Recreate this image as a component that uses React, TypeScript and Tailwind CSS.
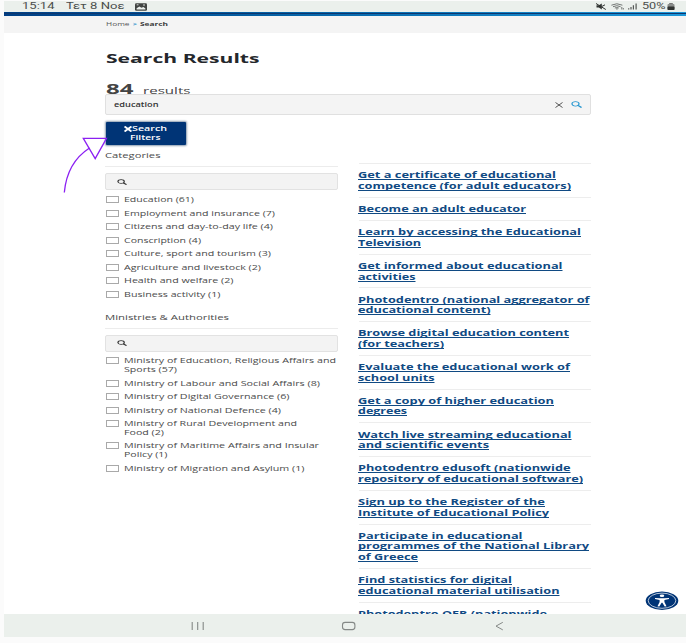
import { useLayoutEffect, useRef, useState } from "react";
import type { ReactNode } from "react";

/* A single line of text stretched horizontally to an exact width. */
function Line({ w, className = "", children }: { w: number; className?: string; children: ReactNode }) {
  const ref = useRef<HTMLSpanElement>(null);
  const [scale, setScale] = useState(1);
  useLayoutEffect(() => {
    const el = ref.current;
    if (el) {
      const natural = parseFloat(getComputedStyle(el).width);
      if (natural > 0) setScale(w / natural);
    }
  }, [w]);
  return (
    <span className={`block text-left ${className}`} style={{ width: w }}>
      <span ref={ref} className="inline-block origin-left whitespace-nowrap align-top" style={{ transform: `scaleX(${scale})` }}>
        {children}
      </span>
    </span>
  );
}

type TextLine = [string, number];

const categories: TextLine[][] = [
  [["Education (61)", 70]],
  [["Employment and insurance (7)", 151]],
  [["Citizens and day-to-day life (4)", 149]],
  [["Conscription (4)", 77]],
  [["Culture, sport and tourism (3)", 147]],
  [["Agriculture and livestock (2)", 137]],
  [["Health and welfare (2)", 109.5]],
  [["Business activity (1)", 96.5]],
];

const ministries: TextLine[][] = [
  [["Ministry of Education, Religious Affairs and", 212], ["Sports (57)", 53]],
  [["Ministry of Labour and Social Affairs (8)", 196]],
  [["Ministry of Digital Governance (6)", 165.5]],
  [["Ministry of National Defence (4)", 157]],
  [["Ministry of Rural Development and", 173], ["Food (2)", 40]],
  [["Ministry of Maritime Affairs and Insular", 195], ["Policy (1)", 43.5]],
  [["Ministry of Migration and Asylum (1)", 180.5]],
];

const results: TextLine[][] = [
  [["Get a certificate of educational", 198], ["competence (for adult educators)", 213]],
  [["Become an adult educator", 168]],
  [["Learn by accessing the Educational", 223], ["Television", 63]],
  [["Get informed about educational", 204.5], ["activities", 57.5]],
  [["Photodentro (national aggregator of", 231.5], ["educational content)", 132.5]],
  [["Browse digital education content", 211], ["(for teachers)", 86]],
  [["Evaluate the educational work of", 212], ["school units", 76.5]],
  [["Get a copy of higher education", 196], ["degrees", 49]],
  [["Watch live streaming educational", 213.5], ["and scientific events", 131]],
  [["Photodentro edusoft (nationwide", 212.5], ["repository of educational software)", 225]],
  [["Sign up to the Register of the", 187], ["Institute of Educational Policy", 191]],
  [["Participate in educational", 164.5], ["programmes of the National Library", 231], ["of Greece", 60]],
  [["Find statistics for digital", 154], ["educational material utilisation", 201.5]],
  [["Photodentro OER (nationwide", 189]],
];

function SearchIcon({ className }: { className: string }) {
  return (
    <svg viewBox="0 0 22 22" preserveAspectRatio="none" fill="none" stroke="currentColor" className={className}>
      <circle cx="9" cy="9" r="7" strokeWidth="2.6" />
      <path d="M14 14l7 6.5" strokeWidth="3.4" />
    </svg>
  );
}

function Filter({ title, titleWidth, items, className, listClass }: { title: string; titleWidth: number; items: TextLine[][]; className: string; listClass: string }) {
  return (
    <section className={className}>
      <h2 className="h-[17px] border-b border-[#ececec] text-[7.5px] leading-[10px] text-[#4b4b4b]">
        <Line w={titleWidth}>{title}</Line>
      </h2>
      <div className="mt-[5.5px] flex h-[17.5px] items-center rounded-[2px] border border-[#e2e2e2] bg-[#f3f3f3] pl-[11px]">
        <SearchIcon className="h-[6px] w-[10px] text-[#333]" />
      </div>
      <ul className={`flex flex-col gap-[4.5px] text-[6.8px] leading-[8.95px] text-[#4b4b4b] ${listClass}`}>
        {items.map((lines) => (
          <li key={lines[0][0]} className="flex gap-[5px]">
            <span className="ml-px h-[7px] w-[12.5px] shrink-0 border border-[#a9a9a9] bg-white" />
            <div>
              {lines.map(([text, w]) => (
                <Line key={text} w={w}>{text}</Line>
              ))}
            </div>
          </li>
        ))}
      </ul>
    </section>
  );
}

function StatusBar() {
  return (
    <div className="flex h-[11px] items-center bg-[#ebf0ec] pl-[18px] pr-[11px] font-['Roboto',sans-serif] text-[9px] leading-[11px] text-[#4a4d4b]">
      <Line w={32.5}>15:14</Line>
      <Line w={58.5} className="ml-[11px]">Τετ 8 Νοε</Line>
      <svg viewBox="0 0 12 8" className="ml-[10.5px] h-[8px] w-[12px]">
        <rect width="12" height="7.5" y="0.2" rx="1.3" fill="#414442" />
        <path d="M1.6 6.4V5.3L4.4 3.6l2 1.2L8.4 4l2 1.4v1z" fill="#ebf0ec" />
        <path d="M1.7 1.8h1.8M8 2h2" stroke="#ebf0ec" strokeWidth="0.9" />
      </svg>
      <div className="ml-auto flex items-center">
        <svg viewBox="0 0 10 7" className="h-[7px] w-[10px]">
          <path d="M.5 2.3h2.4L5.8.6v5.8L2.9 4.6H.5z" fill="#303331" />
          <path d="M0 .5l9.8 6M6 3.4l3-1.6" stroke="#303331" strokeWidth="1" />
        </svg>
        <svg viewBox="0 0 13 7" fill="none" stroke="#737775" strokeWidth="1" className="ml-[5px] h-[7px] w-[13px]">
          <path d="M.4 2.2Q5.8-.7 11.4 2.2M2 3.7q3.8-2 7.6 0M3.8 5q2-1 4 0" />
          <path d="M5 5.9h1.8M10.8 4v2.5M12.3 5v1.5" />
        </svg>
        <svg viewBox="0 0 9 7" stroke="#555856" className="ml-[4px] h-[7px] w-[9px]">
          <path d="M.7 5.2v1.3M3 4v2.5M5.4 2.2v4.3M8.1.4v6.1" strokeWidth="1.2" />
        </svg>
        <Line w={23.5} className="ml-[5px]">50%</Line>
        <svg viewBox="0 0 8 7" className="ml-[2px] h-[7px] w-[8px]">
          <rect x="2.2" width="3.6" height="2" fill="#777" />
          <rect x=".5" y="1" width="7" height="6" rx="1" fill="#8b8e8c" />
          <rect x=".5" y="3.6" width="7" height="3.4" rx=".8" fill="#303331" />
        </svg>
      </div>
    </div>
  );
}

function NavBar() {
  return (
    <div className="h-[23px] bg-[#ebf0ec]">
      <svg viewBox="0 0 682 23" fill="none" stroke="#858987" className="block h-[23px] w-[682px]">
        <path d="M188.2 8v8M193.7 8v8M199.2 8v8" strokeWidth="1.1" />
        <rect x="338.5" y="8.4" width="12.4" height="7.2" rx="2.6" strokeWidth="1.1" />
        <path d="M498.8 8.3l-6.8 3.8 6.8 3.8" strokeWidth="1" />
      </svg>
    </div>
  );
}

export default function App() {
  return (
    <div className="relative h-[643px] w-[686px] overflow-hidden bg-[#fbfbfb] pl-[4px] pt-px font-['Open_Sans','Noto_Sans',sans-serif]">
      <StatusBar />
      <div className="h-[4px] bg-linear-to-r from-[#003f84] to-[#1b96d8] pt-px">
        <div className="h-px bg-[#0d376f]" />
      </div>
      <nav className="flex h-[17px] items-center bg-[#f4f4f4] pl-[102px] text-[6px] leading-[9px] text-[#555]">
        <Line w={23.5}>Home</Line>
        <Line w={4} className="ml-[3.5px] font-bold text-[#2890ca]">&gt;</Line>
        <Line w={28} className="ml-[3px] font-bold text-[#3b3b3b]">Search</Line>
      </nav>

      <main className="h-[581px] overflow-hidden bg-white pl-[101px]">
        <h1 className="ml-px pt-[16px] text-[13px] font-bold leading-[18px] text-[#24272c]">
          <Line w={153.5}>Search Results</Line>
        </h1>
        <div className="ml-px flex h-[27px] items-end gap-[9px] text-[#444]">
          <Line w={27.5} className="-mb-[4.5px] text-[14px] font-bold leading-[20px]">84</Line>
          <Line w={47.5} className="-mb-[4px] text-[9.5px] leading-[14px]">results</Line>
        </div>
        <div className="flex h-[21px] w-[486px] items-center rounded-[2px] border border-[#e0e0e0] bg-[#f4f4f4] pl-[8px] pr-[8px] text-[7px] leading-[10px]">
          <Line w={44.5} className="font-semibold text-[#333]">education</Line>
          <svg viewBox="0 0 8 6" stroke="#555" strokeWidth="1" className="ml-auto h-[6px] w-[8px]">
            <path d="M.5.5l7 5M7.5.5l-7 5" />
          </svg>
          <SearchIcon className="ml-[8.5px] h-[7px] w-[11px] text-[#2797d0]" />
        </div>
        <button className="ml-px mt-[6.5px] flex h-[23.5px] w-[80px] flex-col items-center justify-center rounded-[1px] bg-[#003476] text-[7.3px] font-semibold leading-[9px] text-white shadow-[0_0_2px_1px_#8a9bb0]">
          <span className="-ml-px flex items-center">
            <svg viewBox="0 0 8 6" stroke="#fff" strokeWidth="1.9" className="h-[6px] w-[8px]">
              <path d="M.5.5l7 5M7.5.5l-7 5" />
            </svg>
            <Line w={35}>Search</Line>
          </span>
          <Line w={30.5} className="-ml-px">Filters</Line>
        </button>

        <div className="flex w-[486px] gap-[21px]">
          <aside className="w-[232.5px] shrink-0 pt-[5.3px]">
            <Filter title="Categories" titleWidth={55.5} items={categories} className="" listClass="mt-[6.2px]" />
            <Filter title="Ministries & Authorities" titleWidth={124} items={ministries} className="mt-[12.5px]" listClass="mt-[5.2px]" />
          </aside>
          <ul className="mt-[18px] flex-1 text-[8px] font-bold leading-[10.55px] text-[#104a83]">
            {results.map((lines) => (
              <li key={lines[0][0]} className="border-t border-[#ededed] pb-[5.35px] pt-[6.3px]">
                <a className="-ml-[0.5px] block">
                  {lines.map(([text, w]) => (
                    <Line key={text} w={w}>
                      <span className="underline decoration-[1px] underline-offset-[1.2px] [text-decoration-skip-ink:none]">{text}</span>
                    </Line>
                  ))}
                </a>
              </li>
            ))}
          </ul>
        </div>
      </main>
      <NavBar />

      <svg viewBox="0 0 50 60" fill="none" stroke="#8b20f2" strokeWidth="1.3" className="absolute left-[60px] top-[135px] h-[60px] w-[50px]">
        <path d="M4.3 57.5C6 39 14 23 29.5 13" />
        <path d="M23.3 3.3h23.2L35.2 23.6z" />
      </svg>

      <svg viewBox="0 0 34 20" className="absolute left-[645px] top-[591px] h-[20px] w-[34px]">
        <ellipse cx="17" cy="9.7" rx="16.3" ry="9.2" fill="#003476" />
        <ellipse cx="17" cy="9.7" rx="13.8" ry="7.6" fill="none" stroke="#fff" strokeWidth=".7" />
        <ellipse cx="17" cy="4.8" rx="2.3" ry="1.3" fill="#fff" />
        <path d="M10 6.9l4.8.3h4.4l4.8-.3v1.2l-4.6.8v2.2l2.1 4.1-1.8.4-2.3-3.8h-.8l-2.3 3.8-1.8-.4 2.1-4.1V8.900L10 8.100z" fill="#fff" />
      </svg>
    </div>
  );
}
